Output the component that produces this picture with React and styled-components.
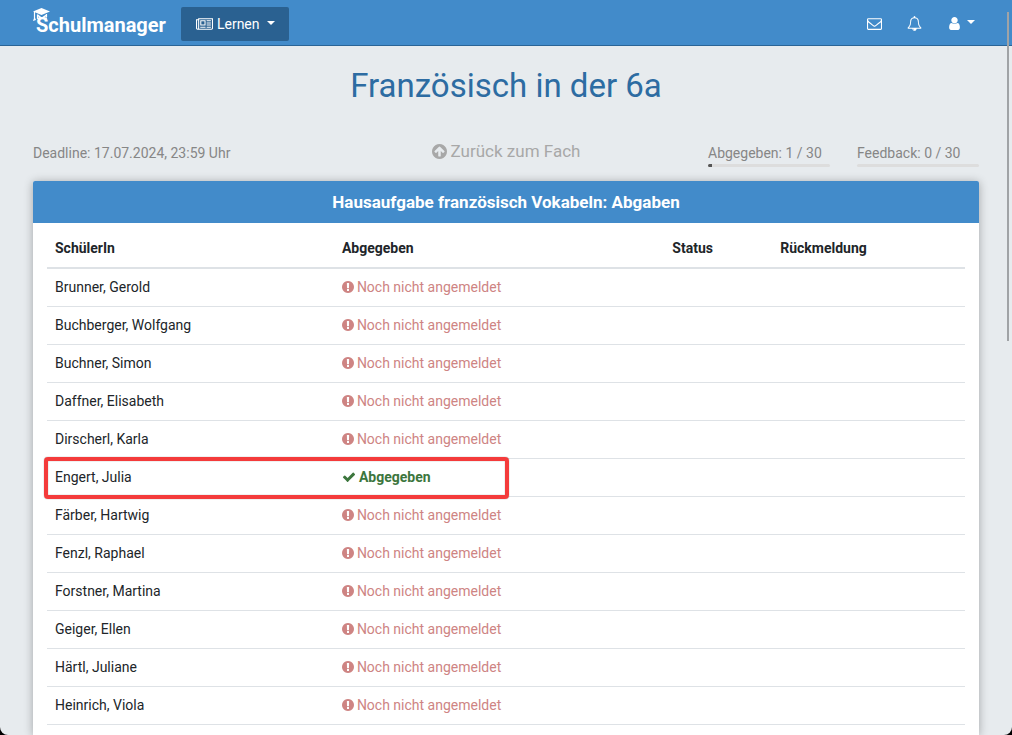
import React from 'react';
import styled, { createGlobalStyle } from 'styled-components';

const GlobalStyle = createGlobalStyle`
  *, *::before, *::after { box-sizing: border-box; }
  body {
    margin: 0;
    background: #000;
    color: #212529;
    font-family: Roboto, "Liberation Sans", sans-serif;
    font-size: 14px;
    line-height: 21px;
  }
`;

const Page = styled.div`
  position: relative;
  display: flex;
  flex-direction: column;
  height: 100vh;
  overflow: hidden;
  background: #e7ebee;
  border-radius: 0 0 8px 8px;
`;

const Navbar = styled.header`
  display: flex;
  align-items: center;
  flex: none;
  height: 46px;
  padding: 2px 37px 0 33px;
  background: #428bca;
  border-bottom: 1px solid #2a6496;
  color: #fff;
`;

const Brand = styled.a`
  position: relative;
  padding: 4px 0 0 3px;
  margin-right: 15px;
  color: #fff;
  font-size: 20px;
  font-weight: 700;
  text-decoration: none;
`;

const Cap = styled.svg`
  position: absolute;
  left: 0;
  top: -4px;
  width: 18px;
  height: 16px;
`;

const NavMenu = styled.button`
  display: flex;
  align-items: center;
  gap: 4px;
  height: 34px;
  padding: 2px 14px 0 15px;
  border: 0;
  border-radius: 2px;
  background: #2a6191;
  color: #fff;
  font: inherit;
`;

const NavTools = styled.nav`
  display: flex;
  align-items: center;
  gap: 25px;
  margin-left: auto;
`;

const ToolButton = styled.button`
  display: flex;
  align-items: center;
  gap: 2px;
  padding: 0;
  border: 0;
  background: none;
  color: #fff;
`;

const Caret = styled.span`
  margin: 0 0 3px 3px;
  border: 4px solid transparent;
  border-top-color: currentColor;
  border-bottom: 0;
`;

const Glyph = styled.svg`
  flex: none;
  width: ${(p) => p.$width || 15}px;
  height: ${(p) => p.$height || 15}px;
  fill: currentColor;
`;

const Main = styled.main`
  display: flex;
  flex: 1;
  flex-direction: column;
  padding: 19px 33px 0;
`;

const Title = styled.h1`
  margin: 0;
  color: #2d6ca2;
  font-size: 33px;
  font-weight: 400;
  line-height: 42px;
  text-align: center;
`;

const InfoBar = styled.div`
  display: grid;
  grid-template-columns: 1fr auto 1fr;
  align-items: start;
  margin-top: 35px;
  height: 39px;
  color: #868686;
`;

const Deadline = styled.div`
  line-height: 22px;
`;

const BackLink = styled.a`
  display: flex;
  align-items: center;
  gap: 4px;
  color: #a8a8a8;
  font-size: 17px;
  line-height: 18px;
  text-decoration: none;
`;

const Counters = styled.div`
  display: flex;
  justify-content: flex-end;
  gap: 27px;
`;

const Counter = styled.div`
  width: 122px;
  line-height: 22px;
`;

const Track = styled.div`
  height: 3px;
  overflow: hidden;
  border-radius: 2px;
  background: #ddd;
`;

const Fill = styled.div`
  height: 100%;
  background: #555;
`;

const Card = styled.section`
  flex: 1;
  background: #fff;
  border-radius: 2px 2px 0 0;
  box-shadow: 0 1px 10px rgba(0, 0, 0, 0.3);
`;

const CardTitle = styled.h2`
  margin: 0;
  background: #428bca;
  border-radius: 2px 2px 0 0;
  color: #fff;
  font-size: 17px;
  font-weight: 700;
  line-height: 42px;
  text-align: center;
`;

const TableArea = styled.div`
  padding: 7px 14px 0;
`;

const Table = styled.table`
  width: 100%;
  border-spacing: 0;
  table-layout: fixed;
`;

const HeadCell = styled.th`
  width: ${(p) => p.$width};
  padding: 8px;
  border-bottom: 2px solid #dee2e6;
  font-weight: 700;
  text-align: left;
`;

const Row = styled.tr`
  position: relative;
`;

const Cell = styled.td`
  padding: 8px;
  border-bottom: 1px solid #dee2e6;
`;

const Highlight = styled.span`
  position: absolute;
  left: -3px;
  top: -2px;
  bottom: -2px;
  width: 465px;
  border: 4px solid #f43b3b;
  border-radius: 4px;
  box-shadow: 0 0 1px rgba(0, 0, 0, 0.6), inset 0 0 1px rgba(0, 0, 0, 0.6);
`;

const State = styled.span`
  display: flex;
  align-items: center;
  gap: 3px;
  color: ${(p) => (p.$done ? '#3c763d' : '#ce8483')};
  font-weight: ${(p) => (p.$done ? 700 : 400)};

  ${Glyph} {
    margin-bottom: 2px;
  }
`;

const ScrollThumb = styled.div`
  position: absolute;
  top: 12px;
  right: 3px;
  width: 2px;
  height: 329px;
  background: #a0a3a6;
`;

const icons = {
  news: 'M1024 512h-384v384h384v-384zm128 640v128h-640v-128h640zm0-768v640h-640v-640h640zm640 768v128h-512v-128h512zm0-256v128h-512v-128h512zm0-256v128h-512v-128h512zm0-256v128h-512v-128h512zm-1536 960v-960h-128v960q0 26 19 45t45 19 45-19 19-45zm1664 0v-1088h-1536v1088q0 33-11 64h1483q26 0 45-19t19-45zm128-1216v1216q0 80-56 136t-136 56h-1664q-80 0-136-56t-56-136v-1088h256v-128h1792z',
  mail: 'M1664 1504v-768q-32 36-69 66-268 206-426 338-51 43-83 67t-86.5 48.5-102.5 24.5h-2q-48 0-102.5-24.5t-86.5-48.5-83-67q-158-132-426-338-37-30-69-66v768q0 13 9.5 22.5t22.5 9.5h1472q13 0 22.5-9.5t9.5-22.5zm0-1051v-24.5l-.5-13-3-12.5-5.5-9-9-7.5-14-2.5h-1472q-13 0-22.5 9.5t-9.5 22.5q0 168 147 284 193 152 401 317 6 5 35 29.5t46 37.5 44.5 31.5 50.5 27.5 43 9h2q20 0 43-9t50.5-27.5 44.5-31.5 46-37.5 35-29.5q208-165 401-317 54-43 100.5-115.5t46.5-131.5zm128-37v1088q0 66-47 113t-113 47h-1472q-66 0-113-47t-47-113v-1088q0-66 47-113t113-47h1472q66 0 113 47t47 113z',
  bell: 'M912 1696q0-16-16-16-59 0-101.5-42.5t-42.5-101.5q0-16-16-16t-16 16q0 73 51.5 124.5t124.5 51.5q16 0 16-16zm-666-288h1300q-266-300-266-832 0-51-24-105t-69-103-121.5-80.5-169.5-31.5-169.5 31.5-121.5 80.5-69 103-24 105q0 532-266 832zm1482 0q0 52-38 90t-90 38h-448q0 106-75 181t-181 75-181-75-75-181h-448q-52 0-90-38t-38-90q50-42 91-88t85-119.5 74.5-158.5 50-206 19.5-260q0-152 117-282.5t307-158.5q-8-19-8-39 0-40 28-68t68-28 68 28 28 68q0 20-8 39 190 28 307 158.5t117 282.5q0 139 19.5 260t50 206 74.5 158.5 85 119.5 91 88z',
  user: 'M1536 1399q0 109-62.5 187t-150.5 78h-854q-88 0-150.5-78t-62.5-187q0-85 8.5-160.5t31.5-152 58.5-131 94-89 134.5-34.5q131 128 313 128t313-128q76 0 134.5 34.5t94 89 58.5 131 31.5 152 8.5 160.5zm-256-887q0 159-112.5 271.5t-271.5 112.5-271.5-112.5-112.5-271.5 112.5-271.5 271.5-112.5 271.5 112.5 112.5 271.5z',
  up: 'M1412 895q0-27-18-45l-362-362-91-91q-18-18-45-18t-45 18l-91 91-362 362q-18 18-18 45t18 45l91 91q18 18 45 18t45-18l189-189v502q0 26 19 45t45 19h128q26 0 45-19t19-45v-502l189 189q19 19 45 19t45-19l91-91q18-18 18-45zm252 1q0 209-103 385.5t-279.5 279.5-385.5 103-385.5-103-279.5-279.5-103-385.5 103-385.5 279.5-279.5 385.5-103 385.5 103 279.5 279.5 103 385.5z',
  warn: 'M896 128q209 0 385.5 103t279.5 279.5 103 385.5-103 385.5-279.5 279.5-385.5 103-385.5-103-279.5-279.5-103-385.5 103-385.5 279.5-279.5 385.5-103zm128 1247v-190q0-14-9-23.5t-22-9.5h-192q-13 0-23 10t-10 23v190q0 13 10 23t23 10h192q13 0 22-9.5t9-23.5zm-2-344l18-621q0-12-10-18-10-8-24-8h-220q-14 0-24 8-10 6-10 18l17 621q0 10 10 17.5t24 7.5h185q14 0 23.5-7.5t10.5-17.5z',
  check: 'M1671 566q0 40-28 68l-724 724-136 136q-28 28-68 28t-68-28l-136-136-362-362q-28-28-28-68t28-68l136-136q28-28 68-28t68 28l294 295 656-657q28-28 68-28t68 28l136 136q28 28 28 68z',
};

function Icon({ name, box = '0 0 1792 1792', width, height }) {
  return (
    <Glyph viewBox={box} $width={width} $height={height} aria-hidden="true">
      <path d={icons[name]} />
    </Glyph>
  );
}

const students = [
  'Brunner, Gerold',
  'Buchberger, Wolfgang',
  'Buchner, Simon',
  'Daffner, Elisabeth',
  'Dirscherl, Karla',
  'Engert, Julia',
  'Färber, Hartwig',
  'Fenzl, Raphael',
  'Forstner, Martina',
  'Geiger, Ellen',
  'Härtl, Juliane',
  'Heinrich, Viola',
];

const submitted = ['Engert, Julia'];

const counters = [
  { label: 'Abgegeben', count: 1, total: 30 },
  { label: 'Feedback', count: 0, total: 30 },
];

function StudentRow({ name }) {
  const done = submitted.includes(name);
  return (
    <Row>
      <Cell>
        {name}
        {done && <Highlight />}
      </Cell>
      <Cell>
        <State $done={done}>
          <Icon name={done ? 'check' : 'warn'} box={done ? undefined : '128 128 1536 1536'} width={done ? 14 : 12} height={done ? 14 : 12} />
          {done ? 'Abgegeben' : 'Noch nicht angemeldet'}
        </State>
      </Cell>
      <Cell />
      <Cell />
    </Row>
  );
}

export default function App() {
  return (
    <>
      <GlobalStyle />
      <Page>
        <Navbar>
          <Brand href="#">
            <Cap viewBox="0 0 18 16" aria-hidden="true">
              <path d="M0 4.5 8.5 1 17 4.500 8.500 8z" fill="#fff" />
              <path d="M1.500 5v6" fill="none" stroke="#fff" strokeWidth="1.200" />
              <path d="M1.500 9.500 0 14l3-1z" fill="#fff" />
              <path d="M4.500 7.500v4M13.500 7v3" fill="none" stroke="#fff" strokeWidth="1.200" />
              <path d="M4.500 8q4 4.500 9.500 3M13.500 8q-4 4-9.500 3" fill="none" stroke="#fff" strokeWidth="1.400" />
            </Cap>
            Schulmanager
          </Brand>
          <NavMenu type="button">
            <Icon name="news" box="0 0 2048 1792" width={17} height={15} />
            Lernen
            <Caret />
          </NavMenu>
          <NavTools>
            <ToolButton type="button" aria-label="Nachrichten"><Icon name="mail" /></ToolButton>
            <ToolButton type="button" aria-label="Benachrichtigungen"><Icon name="bell" /></ToolButton>
            <ToolButton type="button" aria-label="Konto"><Icon name="user" /><Caret /></ToolButton>
          </NavTools>
        </Navbar>
        <Main>
          <Title>Französisch in der 6a</Title>
          <InfoBar>
            <Deadline>Deadline: 17.07.2024, 23:59 Uhr</Deadline>
            <BackLink href="#">
              <Icon name="up" box="128 128 1536 1536" width={15} height={15} />
              Zurück zum Fach
            </BackLink>
            <Counters>
              {counters.map((c) => (
                <Counter key={c.label}>
                  {c.label}: {c.count} / {c.total}
                  <Track>
                    <Fill style={{ width: `${(c.count / c.total) * 100}%` }} />
                  </Track>
                </Counter>
              ))}
            </Counters>
          </InfoBar>
          <Card>
            <CardTitle>Hausaufgabe französisch Vokabeln: Abgaben</CardTitle>
            <TableArea>
              <Table>
                <thead>
                  <tr>
                    <HeadCell $width="31.25%">SchülerIn</HeadCell>
                    <HeadCell $width="36%">Abgegeben</HeadCell>
                    <HeadCell $width="11.75%">Status</HeadCell>
                    <HeadCell>Rückmeldung</HeadCell>
                  </tr>
                </thead>
                <tbody>
                  {students.map((name) => <StudentRow key={name} name={name} />)}
                </tbody>
              </Table>
            </TableArea>
          </Card>
        </Main>
        <ScrollThumb />
      </Page>
    </>
  );
}
